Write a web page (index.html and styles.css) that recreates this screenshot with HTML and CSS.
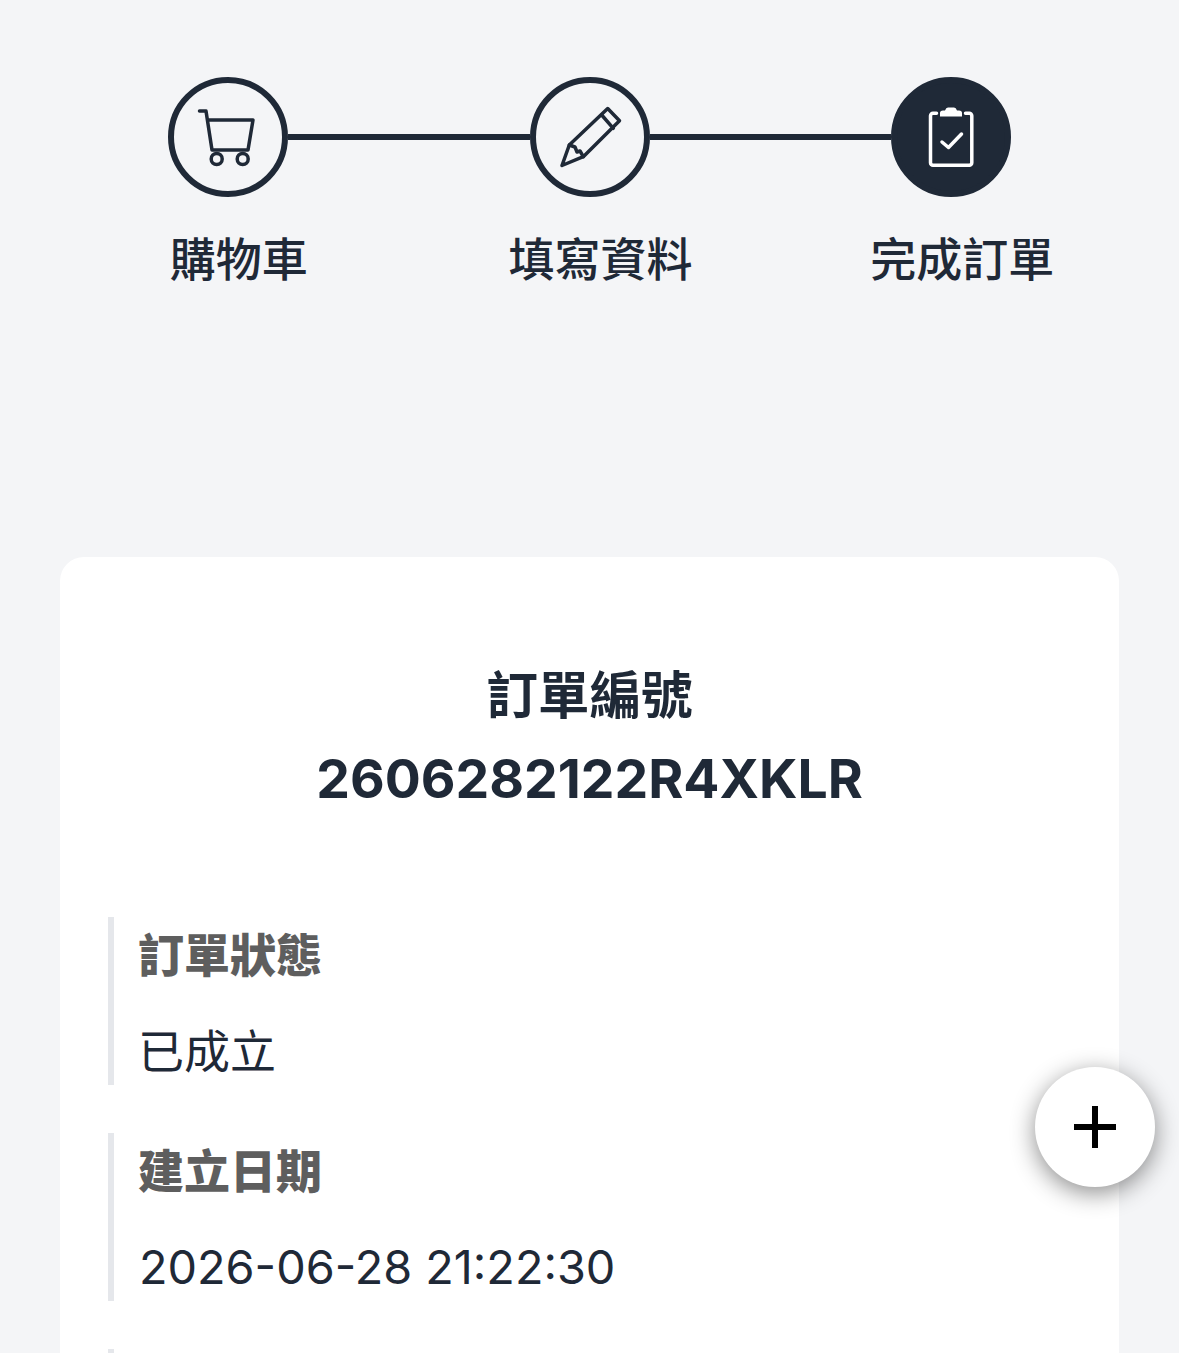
FILE: index.html
```html
<!DOCTYPE html>
<html lang="zh-Hant">
<head>
    <meta charset="UTF-8">
    <meta name="viewport" content="width=device-width, initial-scale=1.0">
    <title>完成訂單</title>
    <link rel="stylesheet" href="styles.css">
</head>
<body>
<div class="stepper">
    <div class="step-track">
        <div class="step-circle">
            <svg class="step-icon" viewBox="0 0 60 60">
                <path d="M1.5 4H8L14 43H50L55 13H9.5"/>
                <circle cx="18.7" cy="52" r="5.5"/>
                <circle cx="44.7" cy="52" r="5.5"/>
            </svg>
        </div>
        <div class="step-line"></div>
        <div class="step-circle">
            <svg class="step-icon" viewBox="0 0 60 60">
                <path d="M2 58.5L9.3 38L47.7 1.5L59.5 13.7L23.3 49.7Z"/>
                <path d="M41.7 8L53.3 21.3"/>
                <path d="M9.3 38L15 40L17 45L20 44L23.3 49.7"/>
            </svg>
        </div>
        <div class="step-line"></div>
        <div class="step-circle active">
            <svg class="step-icon" viewBox="0 0 60 60">
                <path d="M15.5 6.2H12A2.5 2.5 0 0 0 9.5 8.7V55.7A2.5 2.5 0 0 0 12 58.2H48.3A2.5 2.5 0 0 0 50.8 55.7V8.7A2.5 2.5 0 0 0 48.3 6.2H44.5"/>
                <path class="clip" d="M19 9.5V6Q19 3.5 22 3.5H24Q25 0.5 27 0.5H33Q35 0.5 36 3.5H38Q41 3.5 41 6V9.5Z"/>
                <path d="M21 35L27.5 40.5L40.5 27"/>
            </svg>
        </div>
    </div>
    <div class="step-labels">
        <div class="step-label">購物車</div>
        <div class="step-label">填寫資料</div>
        <div class="step-label">完成訂單</div>
    </div>
</div>

<div class="card">
    <h2 class="order-title">訂單編號<br><span class="order-number">2606282122R4XKLR</span></h2>
    <div class="info-row">
        <div class="info-label">訂單狀態</div>
        <div class="info-value">已成立</div>
    </div>
    <div class="info-row">
        <div class="info-label">建立日期</div>
        <div class="info-value info-date">2026-06-28 21:22:30</div>
    </div>
    <div class="info-row"></div>
</div>

<button class="fab" type="button" aria-label="展開">
    <svg viewBox="0 0 42 42"><path d="M21 0V42M0 21H42"/></svg>
</button>
</body>
</html>
```

FILE: styles.css
```css
* {
    margin: 0;
    padding: 0;
    box-sizing: border-box;
}

html, body {
    height: 100%;
    overflow: hidden;
}

body {
    font-family: Inter, "Noto Sans CJK TC", sans-serif;
    background-color: #f4f5f7;
    color: #1f2937;
}

/* Stepper */
.stepper {
    padding-top: 77px;
}

.step-track {
    display: flex;
    align-items: center;
    padding: 0 168px;
}

.step-circle {
    flex: none;
    width: 120px;
    height: 120px;
    border: 6px solid #1f2937;
    border-radius: 50%;
    display: flex;
    justify-content: center;
    align-items: center;
}

.step-circle.active {
    background-color: #1f2937;
}

.step-line {
    flex: 1;
    height: 6px;
    background-color: #1f2937;
}

.step-icon {
    width: 60px;
    height: 60px;
    overflow: visible;
    fill: none;
    stroke: #1f2937;
    stroke-width: 3.5;
    stroke-linecap: round;
    stroke-linejoin: round;
}

.active .step-icon {
    stroke: #fff;
}

.active .step-icon .clip {
    fill: #fff;
    stroke: none;
}

.step-labels {
    display: grid;
    grid-template-columns: repeat(3, 1fr);
    margin-top: 26px;
    padding: 0 36px 0 58px;
}

.step-label {
    text-align: center;
    font-size: 46px;
    line-height: 72px;
    font-weight: 500;
}

/* Order card */
.card {
    margin: 262px 60px 0;
    padding: 97px 48px 0;
    background-color: #fff;
    border-radius: 24px;
}

.order-title {
    text-align: center;
    font-size: 51.5px;
    line-height: 83px;
    font-weight: 700;
    margin-bottom: 96px;
}

.order-number {
    font-size: 53.5px;
}

.info-row {
    height: 168px;
    margin-bottom: 48px;
    padding: 2px 0 0 24px;
    border-left: 6px solid #e5e7eb;
}

.info-label {
    font-size: 46px;
    line-height: 72px;
    font-weight: 900;
    color: #5e5e5e;
    margin-bottom: 24px;
}

.info-value {
    font-size: 46px;
    line-height: 72px;
}

.info-date {
    font-size: 46.8px;
    padding-left: 1px;
}

/* Floating button */
.fab {
    position: fixed;
    left: 1035px;
    top: 1067px;
    width: 120px;
    height: 120px;
    border: none;
    border-radius: 50%;
    background-color: #fff;
    box-shadow: 0 6px 24px rgba(0, 0, 0, 0.45);
    display: flex;
    justify-content: center;
    align-items: center;
}

.fab svg {
    width: 42px;
    height: 42px;
    fill: none;
    stroke: #000;
    stroke-width: 6;
}
```
